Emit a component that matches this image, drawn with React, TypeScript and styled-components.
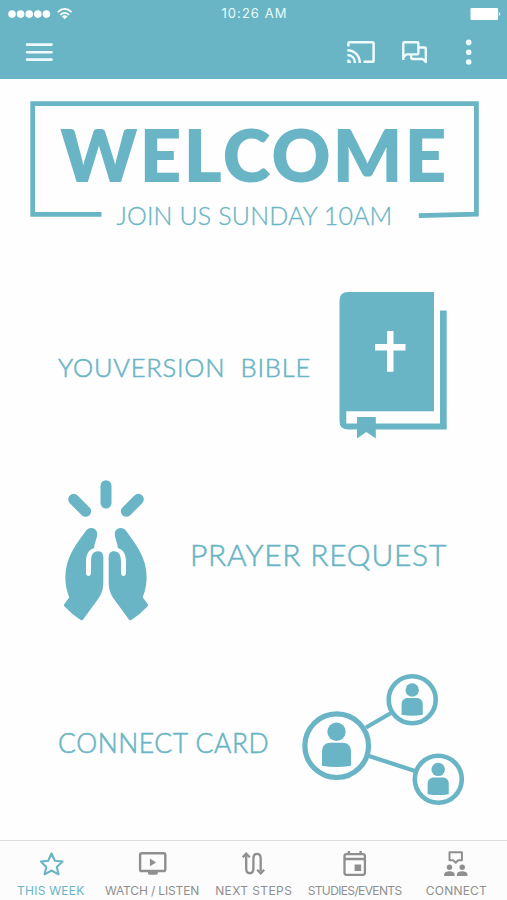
import React from "react";
import styled, { createGlobalStyle } from "styled-components";

const teal = "#69b5c5";
const grey = "#8f8f8f";

const GlobalStyle = createGlobalStyle`
  * { box-sizing: border-box; }
  body { margin: 0; background: #fefefe; }
`;

const Screen = styled.div`
  display: flex;
  flex-direction: column;
  width: 507px;
  height: 900px;
  overflow: hidden;
  background: #fefefe;
  color: ${teal};
  font-family: Lato, "Open Sans", sans-serif;
`;

const Header = styled.header`
  height: 79px;
  flex: none;
  background: ${teal};
  color: #fbffff;
`;

const StatusBar = styled.div`
  display: grid;
  grid-template-columns: 1fr auto 1fr;
  align-items: center;
  height: 27px;
  padding: 0 6px 0 8px;
`;

const Clock = styled.time`
  font: 400 13px/27px Inter, sans-serif;
  letter-spacing: 1.05px;
  color: #e9fafc;
`;

const SignalIcon = styled.svg`
  display: block;
  width: 66px;
  height: 14px;
`;

const BatteryIcon = styled.svg`
  display: block;
  width: 31px;
  height: 14px;
  justify-self: end;
`;

const Toolbar = styled.div`
  display: flex;
  align-items: center;
  justify-content: space-between;
  height: 50px;
  padding: 0 32px 0 25px;
`;

const Actions = styled.div`
  display: grid;
  grid-template-columns: 55px 62px 12px;
  align-items: center;
`;

const IconButton = styled.button`
  display: flex;
  padding: 0;
  border: 0;
  background: none;
  color: inherit;
`;

const Drawing = styled.svg<{ $w: number; $h: number }>`
  display: block;
  flex: none;
  width: ${(p) => p.$w}px;
  height: ${(p) => p.$h}px;
`;

const Content = styled.main`
  display: flex;
  flex-direction: column;
  flex: 1;
  padding-top: 22px;
`;

const Banner = styled.section`
  position: relative;
  display: flex;
  flex-direction: column;
  align-items: center;
  gap: 12px;
  width: 449px;
  height: 128px;
  margin-left: 30px;
  padding-top: 17px;
`;

const BannerFrame = styled.svg`
  position: absolute;
  top: 0;
  left: 0;
  width: 449px;
  height: 118px;
`;

const Title = styled.h1`
  margin: 0;
  font-size: 72.5px;
  font-weight: 800;
  line-height: 72px;
  letter-spacing: 2.35px;
  white-space: nowrap;
`;

const Subtitle = styled.p`
  margin: 0;
  font-size: 25px;
  font-weight: 300;
  line-height: 26px;
  letter-spacing: 0.14px;
  white-space: nowrap;
  -webkit-text-stroke: 0.3px ${teal};
`;

const LinkRow = styled.section<{ $top: number; $left: number; $gap: number }>`
  display: flex;
  align-items: center;
  gap: ${(p) => p.$gap}px;
  margin-top: ${(p) => p.$top}px;
  padding-left: ${(p) => p.$left}px;
`;

const LinkLabel = styled.span<{ $size: number; $spacing: number; $drop: number; $width: number }>`
  width: ${(p) => p.$width}px;
  padding-top: ${(p) => p.$drop}px;
  font-size: ${(p) => p.$size}px;
  font-weight: 300;
  line-height: 1.2;
  letter-spacing: ${(p) => p.$spacing}px;
  white-space: pre;
  -webkit-text-stroke: 0.55px ${teal};
`;

const TabBar = styled.nav`
  display: grid;
  grid-template-columns: repeat(5, 1fr);
  flex: none;
  height: 60px;
  border-top: 1px solid #dedede;
  background: #fcfcfc;
`;

const Tab = styled.a<{ $active?: boolean }>`
  display: flex;
  flex-direction: column;
  align-items: center;
  padding-top: 8px;
  color: ${(p) => (p.$active ? teal : grey)};
`;

const TabLabel = styled.span<{ $spacing: number }>`
  margin-top: 4px;
  margin-right: ${(p) => -p.$spacing}px;
  font: 400 12px/16px Inter, sans-serif;
  letter-spacing: ${(p) => p.$spacing}px;
  white-space: nowrap;
`;

const HAND =
  "M138 182C146 170 166 171 171 186C175 200 161 222 163 234C146 238 138 254 138 274V308C138 321 153 321 153 308V276C153 256 159 244 174 244C185 244 190 251 190 262V335C190 360 183 375 172 390L130 448Q126 453 121 449Q95 433 73 409Q70 405 73 402L88 382C74 350 73 312 82 280C92 242 118 210 138 182Z";

const Person = ({ x, y, s }: { x: number; y: number; s: number }) => (
  <g transform={`translate(${x} ${y}) scale(${s})`} fill="currentColor">
    <circle cx="0" cy="-14" r="9.2" />
    <path d="M-14.5 20V6C-14.5 0-11-3-6-3H6C11-3 14.5 0 14.5 6V20Q0 22.5-14.5 20Z" />
  </g>
);

const tabs = [
  {
    label: "THIS WEEK",
    spacing: 0.27,
    left: 36,
    icon: (
      <path
        d="M51.5 853.5L54.9 860.8L62.6 861.5L56.8 867L58.5 874.3L51.5 870.5L44.6 874.3L46.3 867L40.9 861.5L48.2 860.8Z"
        fill="none"
        stroke="currentColor"
        strokeWidth="2.1"
        strokeLinejoin="round"
      />
    ),
  },
  {
    label: "WATCH / LISTEN",
    spacing: -0.15,
    left: 137.1,
    icon: (
      <g fill="currentColor">
        <rect x="140.2" y="853.2" width="25.2" height="17.8" rx="1.6" fill="none" stroke="currentColor" strokeWidth="2.4" />
        <path d="M150 858.5V866.3L156.2 862.4ZM148 871H158V873Q158 874.8 156.2 874.8H149.8Q148 874.8 148 873Z" />
      </g>
    ),
  },
  {
    label: "NEXT STEPS",
    spacing: 0.4,
    left: 238.5,
    icon: (
      <g fill="none" stroke="currentColor" strokeWidth="2.3">
        <path d="M246.7 855V868.5C246.7 874.8 253.9 874.8 253.9 868.5V858.5C253.9 852.2 261.2 852.2 261.2 858.5V871" />
        <path d="M243.2 857.2L246.7 853.6L250.2 857.2M257.7 869.7L261.2 873.3L264.7 869.7" />
      </g>
    ),
  },
  {
    label: "STUDIES/EVENTS",
    spacing: -0.63,
    left: 339.9,
    icon: (
      <g fill="currentColor">
        <rect x="344.4" y="854.2" width="20.4" height="20.6" rx="2" fill="none" stroke="currentColor" strokeWidth="2.3" />
        <path d="M347.5 851H350V854H347.5ZM359.3 851H361.8V854H359.3ZM344 857.8H365V860.3H344ZM354.5 864.5H361V871H354.5Z" />
      </g>
    ),
  },
  {
    label: "CONNECT",
    spacing: 0.2,
    left: 441.3,
    icon: (
      <g fill="currentColor">
        <path
          d="M449.8 852.2H462.2V860.2H458.5L456 862.7L453.5 860.2H449.8Z"
          fill="none"
          stroke="currentColor"
          strokeWidth="2"
          strokeLinejoin="round"
        />
        <circle cx="449.8" cy="867.2" r="2.7" />
        <circle cx="462.5" cy="867.2" r="2.7" />
        <path d="M444.5 876V874.5C444.5 870.3 455 870.3 455 874.5V876ZM457.2 876V874.5C457.2 870.3 467.7 870.3 467.7 874.5V876Z" />
      </g>
    ),
  },
];

export default function App() {
  return (
    <>
      <GlobalStyle />
      <Screen>
        <Header>
          <StatusBar>
            <SignalIcon viewBox="8 6.5 66 14" fill="#fbffff">
              {[12, 20.6, 29.2, 37.8, 46.4].map((x) => (
                <circle key={x} cx={x} cy="13.6" r="3.8" />
              ))}
              <g fill="none" stroke="#fbffff" strokeWidth="1.8">
                <path d="M57.8 11.6Q64.7 5.2 71.6 11.6M60.3 14.3Q64.7 10.4 69.1 14.3" />
              </g>
              <path d="M61.9 16Q64.7 13.4 67.5 16L64.7 18.8Z" />
            </SignalIcon>
            <Clock>10:26 AM</Clock>
            <BatteryIcon viewBox="470 6.5 31 14" fill="#fff">
              <rect x="470.5" y="7.5" width="27.5" height="12" rx="1" />
              <path d="M498.8 11.5Q501.8 13.5 498.8 15.5Z" />
            </BatteryIcon>
          </StatusBar>
          <Toolbar>
            <IconButton aria-label="Menu">
              <Drawing $w={29} $h={22} viewBox="25 41 29 22" stroke="#effcff" strokeWidth="2.6" strokeLinecap="round">
                <path d="M27 44.6H51.5M27 52.2H51.5M27 59.6H51.5" />
              </Drawing>
            </IconButton>
            <Actions>
              <IconButton aria-label="Cast">
                <Drawing $w={30} $h={26} viewBox="346 39 30 26" fill="none" stroke="#effcff" strokeWidth="2.5">
                  <path d="M348.4 46.5V43.5Q348.4 42.2 349.7 42.2H372.3Q373.6 42.2 373.6 43.5V60.5Q373.6 61.8 372.3 61.8H363.5" />
                  <path d="M347.3 50.3C354.5 50.3 359.8 55.8 359.8 63M347.3 55C352 55 355 58.4 355 63" />
                  <path d="M347.3 59.2A3.8 3.8 0 0 1 351.1 63H347.3Z" fill="#effcff" stroke="none" />
                </Drawing>
              </IconButton>
              <IconButton aria-label="Messages">
                <Drawing $w={28} $h={26} viewBox="401 39 28 26" fill="none" stroke="#effcff" strokeWidth="2.4" strokeLinejoin="round">
                  <path d="M403.3 60V43.3Q403.3 42.2 404.4 42.2H417.2Q418.4 42.2 418.4 43.3V53.2Q418.4 54.4 417.2 54.4H406.4L403.3 57.5" />
                  <path d="M418.8 47.5H424.6Q425.8 47.5 425.8 48.7V62L422.7 59H412.4Q411.2 59 411.2 57.8V54.6" />
                </Drawing>
              </IconButton>
              <IconButton aria-label="More">
                <Drawing $w={12} $h={28} viewBox="463 38 12 28" fill="#effcff">
                  <circle cx="468.7" cy="42.4" r="2.8" />
                  <circle cx="468.7" cy="52.2" r="2.8" />
                  <circle cx="468.7" cy="62" r="2.8" />
                </Drawing>
              </IconButton>
            </Actions>
          </Toolbar>
        </Header>

        <Content>
          <Banner>
            <BannerFrame viewBox="30 101 449 118" fill="none" stroke={teal} strokeWidth="4.8">
              <path d="M101.5 214.4H32.7V103.6H476.4V214.2L418.8 215.6" />
            </BannerFrame>
            <Title>WELCOME</Title>
            <Subtitle>JOIN US SUNDAY 10AM</Subtitle>
          </Banner>

          <LinkRow $top={62} $left={58} $gap={27}>
            <LinkLabel $size={25.5} $spacing={0.75} $drop={3} $width={253}>{"YOUVERSION  BIBLE"}</LinkLabel>
            <Drawing $w={110} $h={150} viewBox="338 291 110 150" fill={teal}>
              <path d="M348 292H434V411.3H346.3V423.5H440V310.5H446.7V429.6H375.8V438.5L366.4 432L357 438.5V429.6H348Q339.5 429.6 339.5 421V301Q339.5 292 348 292Z" />
              <rect x="357" y="417" width="18.8" height="10" />
              <path d="M387 331H393.5V344H405.5V350.4H393.5V371.7H387V350.4H375V344H387Z" fill="#fefefe" />
            </Drawing>
          </LinkRow>

          <LinkRow $top={38} $left={62} $gap={38}>
            <Drawing $w={90} $h={144} viewBox="62 479 90 144" fill={teal}>
              <g transform="translate(40 470) scale(.33333)">
                <path d={HAND} />
                <path d={HAND} transform="translate(396 0) scale(-1 1)" />
                <path d="M198 47V99M101 88L137 124M295 88L259 124" stroke={teal} strokeWidth="33" strokeLinecap="round" />
              </g>
            </Drawing>
            <LinkLabel $size={30} $spacing={0.76} $drop={6} $width={260}>PRAYER REQUEST</LinkLabel>
          </LinkRow>

          <LinkRow $top={50} $left={58} $gap={28}>
            <LinkLabel $size={26.5} $spacing={0.55} $drop={8} $width={215}>CONNECT CARD</LinkLabel>
            <Drawing $w={164} $h={134} viewBox="301 673 164 134" fill="none" stroke={teal} color={teal}>
              <path d="M366 727.5L391 713M369 756L415 771" strokeWidth="4.2" />
              <circle cx="336.7" cy="745.7" r="31.8" strokeWidth="5.2" />
              <circle cx="412.2" cy="699.8" r="23.5" strokeWidth="4.6" />
              <circle cx="438.3" cy="779.3" r="23.5" strokeWidth="4.6" />
              <g stroke="none">
                <Person x={336.5} y={745.8} s={1} />
                <Person x={412.2} y={700.2} s={0.73} />
                <Person x={438.2} y={779.6} s={0.73} />
              </g>
            </Drawing>
          </LinkRow>
        </Content>

        <TabBar>
          {tabs.map((tab, i) => (
            <Tab key={tab.label} $active={i === 0}>
              <Drawing $w={30} $h={30} viewBox={`${tab.left} 849 30 30`}>
                {tab.icon}
              </Drawing>
              <TabLabel $spacing={tab.spacing}>{tab.label}</TabLabel>
            </Tab>
          ))}
        </TabBar>
      </Screen>
    </>
  );
}
